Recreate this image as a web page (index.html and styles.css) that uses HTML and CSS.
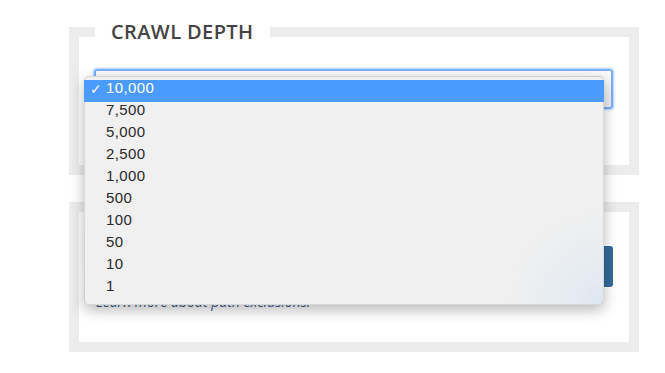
FILE: index.html
```html
<!DOCTYPE html>
<html>
<head>
<meta charset="utf-8">
<link rel="stylesheet" href="styles.css">
</head>
<body>
<div class="page">
  <fieldset class="panel panel-depth">
    <legend class="legend">CRAWL DEPTH</legend>
    <div class="select-box"></div>
  </fieldset>
  <fieldset class="panel panel-exclude">
    <div class="exclude-row">
      <div class="text-input"></div>
      <button class="btn-add" aria-label="Add"></button>
    </div>
    <a class="learn-link" href="#">Learn more about path exclusions.</a>
  </fieldset>

  <ul class="menu">
    <li class="menu-item selected"><span class="check">✓</span>10,000</li>
    <li class="menu-item">7,500</li>
    <li class="menu-item">5,000</li>
    <li class="menu-item">2,500</li>
    <li class="menu-item">1,000</li>
    <li class="menu-item">500</li>
    <li class="menu-item">100</li>
    <li class="menu-item">50</li>
    <li class="menu-item">10</li>
    <li class="menu-item">1</li>
  </ul>
</div>
</body>
</html>
```

FILE: styles.css
```css
html, body {
  margin: 0;
  padding: 0;
  background: #ffffff;
}

body {
  font-family: "Open Sans", "Liberation Sans", sans-serif;
  color: #444;
}

.page {
  position: relative;
  padding: 17px 0 0 69px;
  width: 570px;
}

.panel {
  box-sizing: border-box;
  width: 570px;
  margin: 0;
  border: 10px solid #ececec;
  padding: 0 16px 0 15px;
  min-width: 0;
}

.panel-depth {
  height: 158px;
}

.legend {
  margin-left: 1px;
  padding: 0 16px;
  font-size: 20px;
  font-weight: 600;
  line-height: 30px;
  color: #444;
  letter-spacing: 0.4px;
}

.select-box {
  box-sizing: border-box;
  height: 40px;
  margin-top: 22px;
  border: 2px solid #79b0f5;
  border-radius: 3px;
  box-shadow: 0 0 2px 1px rgba(120, 175, 250, 0.6);
  background: linear-gradient(#fbfbfb, #ececec);
}

.panel-exclude {
  margin-top: 27px;
  height: 150px;
  padding-top: 34px;
}

.exclude-row {
  display: flex;
  gap: 6px;
  height: 41px;
}

.text-input {
  flex: 1;
  border: 1px solid #ccc;
  border-radius: 3px;
  background: #fff;
}

.btn-add {
  width: 90px;
  border: 0;
  border-radius: 3px;
  background: #336a9a;
}

.learn-link {
  display: block;
  margin-top: 5px;
  margin-left: 2px;
  font-size: 14px;
  line-height: 20px;
  font-style: italic;
  color: #3d6089;
  text-decoration: none;
}

.menu {
  position: absolute;
  left: 84px;
  top: 76px;
  width: 520px;
  box-sizing: border-box;
  margin: 0;
  padding: 3px 0 4px 0;
  list-style: none;
  border-radius: 5px;
  border: 1px solid rgba(0, 0, 0, 0.1);
  background:
    radial-gradient(circle at 100% 100%, #dce7f0 0, rgba(226, 234, 241, 0.8) 30px, rgba(240, 240, 240, 0) 95px),
    #f0f0f0;
  box-shadow: 0 5px 14px rgba(0, 0, 0, 0.28);
  font-family: "Liberation Sans", Arial, sans-serif;
  font-size: 15px;
  color: #2a2a2a;
}

.menu-item {
  position: relative;
  height: 22px;
  line-height: 16px;
  padding-left: 21px;
  letter-spacing: 0.4px;
}

.menu-item.selected {
  background: #4a9bfd;
  color: #ffffff;
  margin: 0 -1px;
  padding-left: 22px;
}

.check {
  position: absolute;
  left: 6px;
  top: 1px;
  font-family: "DejaVu Sans", sans-serif;
  font-size: 14px;
}
```
